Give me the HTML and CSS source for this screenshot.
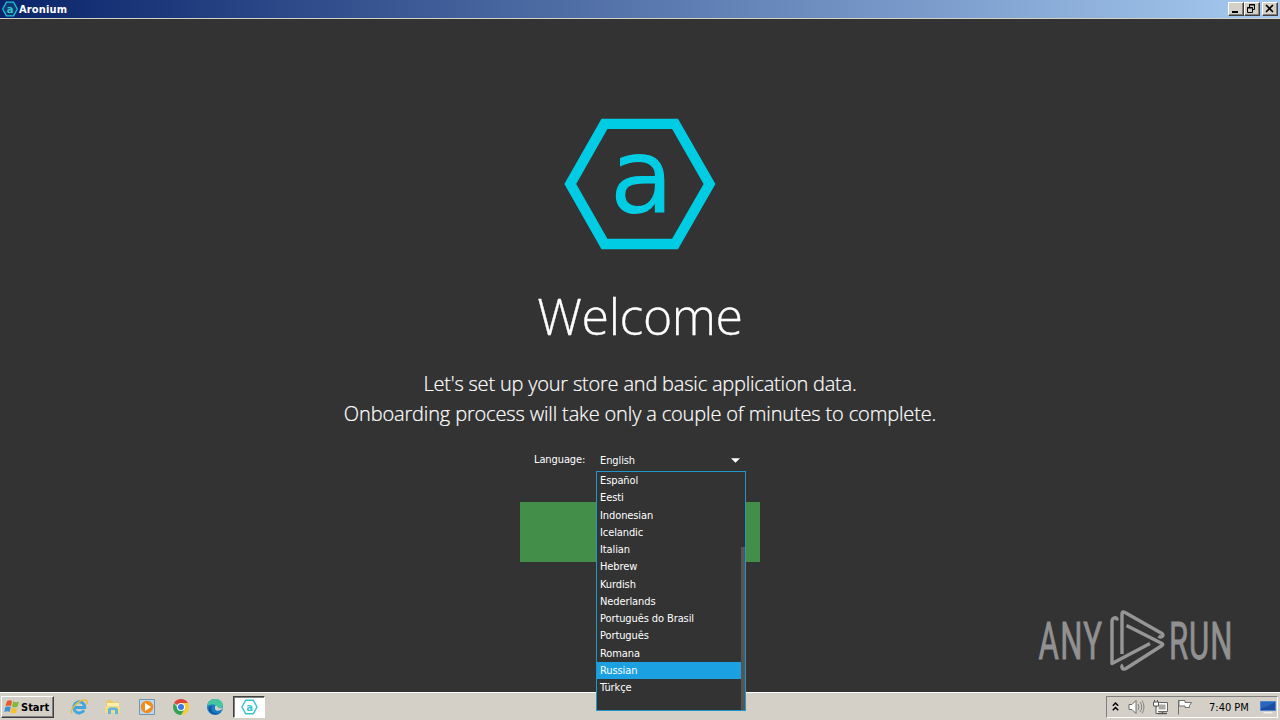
FILE: index.html
```html
<!DOCTYPE html>
<html lang="en">
<head>
<meta charset="utf-8">
<title>Aronium</title>
<link rel="stylesheet" href="styles.css">
</head>
<body>
<div class="screen">
  <header class="titlebar">
    <svg class="app-icon" width="16" height="16" viewBox="0 0 16 16"><path d="M4.4 1.2h7.2L15.3 8l-3.7 6.8H4.4L.7 8z" fill="#123a72" stroke="#1fc0dc" stroke-width="1.3"/><text x="8" y="11.6" text-anchor="middle" class="icon-letter">a</text></svg>
    <span class="app-name">Aronium</span>
    <div class="window-buttons">
      <span class="win-btn"><svg width="13" height="12" viewBox="0 0 13 12"><path d="M3 8h6v2H3z"/></svg></span>
      <span class="win-btn"><svg width="13" height="12" viewBox="0 0 13 12"><path d="M4.5 4V1.500h5v5H8M4 2h6M2.500 4.500h5v5h-5zM2 5h6" fill="none" stroke="#000"/></svg></span>
      <span class="win-btn close"><svg width="13" height="12" viewBox="0 0 13 12"><path d="M3 2l7 7M10 2L3 9" stroke="#000" stroke-width="1.6"/></svg></span>
    </div>
  </header>

  <main class="welcome">
    <svg class="logo" width="152" height="130" viewBox="0 0 152 130"><path d="M40.500 4.800h70.500L145.500 65 111 125H40.500L6.300 65z" fill="none" stroke="#00cde4" stroke-width="10.300"/><text x="45.500" y="93.500" class="logo-letter">a</text></svg>
    <h1 class="title"><span class="title-text">Welcome</span></h1>
    <p class="intro"><span class="line-one">Let's set up your store and basic application data.</span><br><span class="line-two">Onboarding process will take only a couple of minutes to complete.</span></p>
    <div class="language-row">
      <span class="language-label">Language:</span>
      <div class="select">
        <span class="select-value">English</span>
        <svg class="arrow" width="9" height="5" viewBox="0 0 9 5"><path d="M0 .3h9L4.500 4.800z" fill="#fff"/></svg>
        <ul class="menu">
          <li>Español</li><li>Eesti</li><li>Indonesian</li><li>Icelandic</li><li>Italian</li><li>Hebrew</li><li>Kurdish</li><li>Nederlands</li><li>Português do Brasil</li><li>Português</li><li>Romana</li><li class="selected">Russian</li><li>Türkçe</li>
        </ul>
      </div>
    </div>
    <div class="next-button"></div>
    <svg class="watermark" width="200" height="70" viewBox="1035 605 200 70">
      <g class="mark-text"><text transform="translate(1038.500 659) scale(.61 1)" textLength="104">ANY</text><text transform="translate(1169 659) scale(.61 1)" textLength="104">RUN</text></g>
      <path d="M1117 620.500v-1.500q-1-2-3-1-2 1-2 3v42.500l38-20M1122 654v-40q0-3 3-1.500l37 21q2 1.500 0 3.200-1.500 1-3.500-.7M1126.500 625.500l35.500 18q1.500.8 0 2L1126 668.500q-3 1.500-4-1-.5-1.500 1-2.500" fill="none" stroke="#969696" stroke-width="3.400" stroke-linejoin="round"/>
    </svg>
  </main>

  <footer class="taskbar">
    <div class="start"><svg width="17" height="16" viewBox="0 0 17 16"><path d="M3 2q3-1.500 5 0L7 7.200q-2-1.500-5.500-.2z" fill="#e8592b"/><path d="M9 2.600q2.500 1.200 6 .2l-1.500 5q-3 1.200-5.500 0z" fill="#7fba3c"/><path d="M1.300 8q3-1.200 5.500 0l-1.300 5q-2-1.500-5.200 0z" fill="#3d8fd8"/><path d="M7.700 8.700q2.500 1.300 5.700.2l-1.600 5q-3 1-5.400-.2z" fill="#f5c22b"/></svg><b class="start-label">Start</b></div>
    <div class="pinned">
      <svg width="18" height="18" viewBox="0 0 18 18"><path d="M14 12.300A5.600 5.600 0 1 1 14.800 9.500H5" fill="none" stroke="#3fa6df" stroke-width="2.800"/><path d="M2 15.500C-1 12 8 2 15 2c3 0 2.200 3 1.200 4.500" fill="none" stroke="#e8bd3c" stroke-width="1.400"/></svg>
      <svg width="18" height="18" viewBox="0 0 18 18"><path d="M2 4l2-2h4l1 2h6v11H2z" fill="#e9c968"/><path d="M3 5h12v4H3z" fill="#fff0b0"/><path d="M1 8h15v7H1z" fill="#f3da86"/><path d="M4 16v-5l2-1.500h6l2 1.500v5h-3v-4H7v4z" fill="#60b6db"/></svg>
      <svg width="18" height="18" viewBox="0 0 18 18"><path d="M1.500 1.500h15v15h-15z" fill="#b8d9ef" stroke="#7595ae"/><circle cx="9" cy="9" r="6.200" fill="#f08b1d"/><path d="M7 5l6 4-6 4z" fill="#fff"/></svg>
      <svg width="18" height="18" viewBox="0 0 18 18"><path d="M9 9L2.100 5A8 8 0 0 1 15.900 5z" fill="#df4437"/><path d="M9 9V5h6.900A8 8 0 0 1 9 17l4-6z" fill="#f8cd32"/><path d="M9 9l3 3-3 5A8 8 0 0 1 2.100 5l4 6z" fill="#32a350"/><circle cx="9" cy="9" r="4" fill="#fff"/><circle cx="9" cy="9" r="3" fill="#3b78e7"/></svg>
      <svg width="18" height="18" viewBox="0 0 18 18"><circle cx="9" cy="9" r="8" fill="#167dc4"/><path d="M1.200 8C2-1 16-1 17 7c.3 4-4 5-7 3.500 2-3-2-6-8.800-2.500z" fill="#45c6a0"/><path d="M6 8c-3 6 4 9 9 6-6 5-14 1-12-5z" fill="#15559e"/><path d="M9 8c4-1 1 4 8 2-2 3-7 4-8 1z" fill="#d4d0c8"/></svg>
    </div>
    <div class="running"><svg width="17" height="16" viewBox="0 0 17 16"><path d="M4.700 1.200h7.600L16 8l-3.700 6.800H4.700L1 8z" fill="none" stroke="#35c4cf" stroke-width="1.400"/><text x="8.500" y="11.600" text-anchor="middle" class="icon-letter">a</text></svg></div>
    <div class="tray">
      <svg class="chevrons" width="7" height="12" viewBox="0 0 7 12"><path d="M.8 4.700L3.500 2l2.700 2.700M.8 9.200l2.700-2.700 2.700 2.700" fill="none" stroke="#000" stroke-width="1.500"/></svg>
      <svg class="speaker" width="17" height="16" viewBox="0 0 17 16"><path d="M1 5.500h3l4-4v13l-4-4H1z" fill="#fff" stroke="#6b6b6b"/><path d="M10 5q2 3 0 6M12 3q3.500 5 0 10M14 1.500q4 6.500 0 13" fill="none" stroke="#858585"/></svg>
      <svg class="network" width="17" height="16" viewBox="0 0 17 16"><path d="M4.500 3.500h11v9h-11z" fill="#fff" stroke="#666"/><path d="M6.500 5.500h7v5h-7z" fill="#aaa9a4"/><path d="M6 14.500h9M10.500 13v2" stroke="#555" stroke-width="1.300"/><path d="M1.500 3h5v4h-5zM2.500 1v2M5.500 1v2M4 7v7.500h3" fill="#fff" stroke="#555"/></svg>
      <svg class="flag" width="16" height="16" viewBox="0 0 16 16"><path d="M1.500 1v14.500M2 1.500h6v2h6.500l-2 3 0 2H8v-1.500H2z" fill="#fff" stroke="#717171"/></svg>
      <span class="clock">7:40 PM</span>
      <svg class="desktop" width="16" height="14" viewBox="0 0 16 14"><path d="M.5 1.500h15v9H.500z" fill="#2a65bd" stroke="#4f83ce"/><path d="M1 8Q8 7 15 2v8H1z" fill="#184da0"/><path d="M4 12h8l1 1.500H3z" fill="#efeee8"/></svg>
    </div>
  </footer>
</div>
</body>
</html>
```
FILE: styles.css
```css
* { box-sizing: border-box; }
body { margin: 0; font-family: "DejaVu Sans Condensed", "DejaVu Sans", sans-serif; font-stretch: condensed; font-size: 11px; color: #fff; background: #333; }
svg { display: block; flex: none; }
.screen { display: flex; flex-direction: column; width: 1280px; height: 720px; overflow: hidden; }
.titlebar { flex: none; height: 19px; display: flex; align-items: center; padding: 0 2px; background: linear-gradient(90deg, #0a246a, #a6caf0); border-bottom: 1px solid #d4d0c8; }
.app-name { margin-left: 1px; font-weight: bold; letter-spacing: .15px; }
.window-buttons { margin-left: auto; display: flex; }
.win-btn { width: 16px; height: 14px; background: #d4d0c8; border: 1px solid; border-color: #fff #404040 #404040 #fff; box-shadow: inset -1px -1px #808080; }
.win-btn.close { margin-left: 2px; }
.icon-letter { font: bold 10px "DejaVu Sans", sans-serif; fill: #35c4cf; }
.welcome { position: relative; flex: 1; display: flex; flex-direction: column; align-items: center; padding-top: 100px; background: #333; }
.logo { overflow: visible; }
.logo-letter { font: 105px "DejaVu Sans", sans-serif; fill: #00cde4; }
.title { margin: 31px 0 0; height: 73px; font: 300 50px/73px "Open Sans", sans-serif; letter-spacing: -.4px; -webkit-text-stroke: .3px #fff; }
.intro { margin: 16px 0 0; height: 60px; font: 300 20px/30px "Open Sans", sans-serif; text-align: center; white-space: nowrap; -webkit-text-stroke: .2px #fff; }
.line-one { letter-spacing: -.2px; }
.line-two { letter-spacing: -.15px; }
.language-row { width: 240px; height: 24px; margin-top: 19px; padding-left: 14px; display: flex; }
.language-label { width: 62px; line-height: 24px; letter-spacing: -.1px; }
.select { position: relative; width: 150px; display: flex; align-items: center; padding: 0 6px 0 4px; letter-spacing: -.1px; }
.arrow { margin-left: auto; }
.menu { position: absolute; z-index: 2; left: 0; top: 23px; width: 150px; height: 240px; margin: 0; padding: 0; list-style: none; background: #333; border: 1px solid #2196c8; }
.menu::after { content: ""; position: absolute; right: 0; top: 75px; width: 4px; bottom: 0; background: #555; }
.menu li { height: 17.250px; padding-left: 3px; line-height: 17px; white-space: nowrap; }
.menu .selected { background: #1ba1e2; }
.next-button { width: 240px; height: 60px; margin-top: 30px; background: #438e48; }
.watermark { position: absolute; left: 1035px; top: 586px; }
.mark-text { font: 400 51px Roboto, sans-serif; fill: #919191; stroke: #919191; stroke-width: .9px; }
.taskbar { flex: none; height: 28px; display: flex; align-items: center; color: #000; background: #d4d0c8; border-top: 1px solid #fff; padding: 1px 2px 0 0; }
.start { width: 53px; height: 22px; margin-left: 1px; padding-left: 2px; display: flex; align-items: center; border: 1px solid; border-color: #fff #404040 #404040 #fff; box-shadow: inset -1px -1px #808080; }
.start-label { font-size: 11px; }
.pinned { display: flex; gap: 16px; margin-left: 16px; }
.running { width: 32px; height: 22px; margin-left: 9px; display: grid; place-items: center; background: #fff; border: 1px solid; border-color: #404040 #fff #fff #404040; box-shadow: inset 1px 1px #808080; }
.tray { width: 172px; height: 22px; margin-left: auto; padding-left: 5px; display: flex; align-items: center; border: 1px solid; border-color: #808080 #fff #fff #808080; }
.speaker { margin-left: 9px; }
.network { margin-left: 7px; }
.flag { margin-left: 8px; }
.clock { margin-left: 16px; width: 51px; white-space: nowrap; }
```
